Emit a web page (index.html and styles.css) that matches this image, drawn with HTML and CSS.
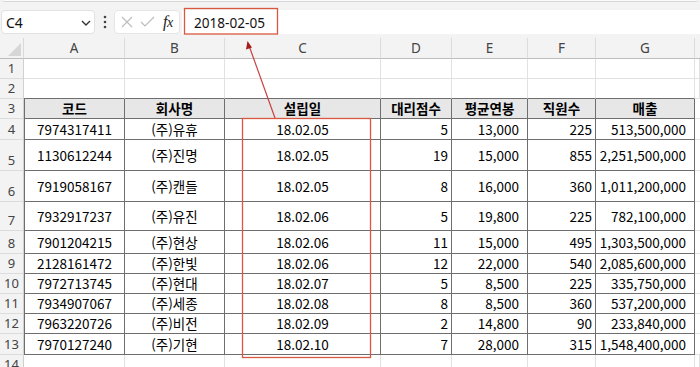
FILE: index.html
```html
<!DOCTYPE html>
<html lang="ko">
<head>
<meta charset="utf-8">
<link rel="stylesheet" href="styles.css">
</head>
<body>
<div class="page">
  <div class="ribbon"><div class="ribbon-panel"></div></div>
  <div class="fbar">
    <div class="namebox">
      <span class="ref">C4</span>
      <svg class="chev" width="10" height="8" viewBox="0 0 10 8"><polyline points="1,2 5,6 9,2" fill="none" stroke="#333" stroke-width="1.4"/></svg>
    </div>
    <svg class="dots" width="4" height="14" viewBox="0 0 4 14"><circle cx="2" cy="2" r="1.3" fill="#444"/><circle cx="2" cy="7" r="1.3" fill="#444"/><circle cx="2" cy="12" r="1.3" fill="#444"/></svg>
    <div class="fxbox">
      <svg width="14" height="14" viewBox="0 0 14 14"><path d="M2 2 L12 12 M12 2 L2 12" stroke="#bdbdbd" stroke-width="1.2" fill="none"/></svg>
      <svg width="15" height="12" viewBox="0 0 15 12"><polyline points="1,6 5,10 14,1" stroke="#bdbdbd" stroke-width="1.2" fill="none"/></svg>
      <span class="fx">f<span class="fxx">x</span></span>
    </div>
    <div class="finput"><span class="ftext">2018-02-05</span></div>
  </div>
  <div class="sheet">
    <div class="corner"><svg width="24" height="21" viewBox="0 0 24 21"><polygon points="21,5 21,18 8,18" fill="#d6d6d6"/></svg></div>
    <div class="ch">A</div><div class="ch">B</div><div class="ch">C</div><div class="ch">D</div><div class="ch">E</div><div class="ch">F</div><div class="ch">G</div><div class="ch last"></div>

    <div class="rh">1</div><div class="c"></div><div class="c"></div><div class="c"></div><div class="c"></div><div class="c"></div><div class="c"></div><div class="c"></div><div class="c"></div>
    <div class="rh">2</div><div class="c tb"></div><div class="c tb"></div><div class="c tb"></div><div class="c tb"></div><div class="c tb"></div><div class="c tb"></div><div class="c tb"></div><div class="c"></div>

    <div class="rh">3</div><div class="t h first">코드</div><div class="t h">회사명</div><div class="t h">설립일</div><div class="t h">대리점수</div><div class="t h">평균연봉</div><div class="t h">직원수</div><div class="t h">매출</div><div class="c tl"></div>

    <div class="rh">4</div><div class="t first">7974317411</div><div class="t">(주)유휴</div><div class="t">18.02.05</div><div class="t r">5</div><div class="t r2">13,000</div><div class="t r">225</div><div class="t r2">513,500,000</div><div class="c tl"></div>
    <div class="rh">5</div><div class="t first">1130612244</div><div class="t">(주)진명</div><div class="t">18.02.05</div><div class="t r">19</div><div class="t r2">15,000</div><div class="t r">855</div><div class="t r2">2,251,500,000</div><div class="c tl"></div>
    <div class="rh">6</div><div class="t first">7919058167</div><div class="t">(주)캔들</div><div class="t">18.02.05</div><div class="t r">8</div><div class="t r2">16,000</div><div class="t r">360</div><div class="t r2">1,011,200,000</div><div class="c tl"></div>
    <div class="rh">7</div><div class="t first">7932917237</div><div class="t">(주)유진</div><div class="t">18.02.06</div><div class="t r">5</div><div class="t r2">19,800</div><div class="t r">225</div><div class="t r2">782,100,000</div><div class="c tl"></div>
    <div class="rh">8</div><div class="t first">7901204215</div><div class="t">(주)현상</div><div class="t">18.02.06</div><div class="t r">11</div><div class="t r2">15,000</div><div class="t r">495</div><div class="t r2">1,303,500,000</div><div class="c tl"></div>
    <div class="rh">9</div><div class="t first">2128161472</div><div class="t">(주)한빛</div><div class="t">18.02.06</div><div class="t r">12</div><div class="t r2">22,000</div><div class="t r">540</div><div class="t r2">2,085,600,000</div><div class="c tl"></div>
    <div class="rh">10</div><div class="t first">7972713745</div><div class="t">(주)현대</div><div class="t">18.02.07</div><div class="t r">5</div><div class="t r2">8,500</div><div class="t r">225</div><div class="t r2">335,750,000</div><div class="c tl"></div>
    <div class="rh">11</div><div class="t first">7934907067</div><div class="t">(주)세종</div><div class="t">18.02.08</div><div class="t r">8</div><div class="t r2">8,500</div><div class="t r">360</div><div class="t r2">537,200,000</div><div class="c tl"></div>
    <div class="rh">12</div><div class="t first">7963220726</div><div class="t">(주)비전</div><div class="t">18.02.09</div><div class="t r">2</div><div class="t r2">14,800</div><div class="t r">90</div><div class="t r2">233,840,000</div><div class="c tl"></div>
    <div class="rh">13</div><div class="t first">7970127240</div><div class="t">(주)기현</div><div class="t">18.02.10</div><div class="t r">7</div><div class="t r2">28,000</div><div class="t r">315</div><div class="t r2">1,548,400,000</div><div class="c tl"></div>
    <div class="rh">14</div><div class="c"></div><div class="c"></div><div class="c"></div><div class="c"></div><div class="c"></div><div class="c"></div><div class="c"></div><div class="c"></div>
  </div>
  <svg class="annot" width="700" height="367" viewBox="0 0 700 367">
    <rect x="184.5" y="8.5" width="93" height="25.5" fill="none" stroke="#d9573f" stroke-width="1.3"/>
    <rect x="242.5" y="118.5" width="128" height="239" fill="none" stroke="#d9573f" stroke-width="1.3"/>
    <line x1="275" y1="118" x2="249.5" y2="47" stroke="#c94040" stroke-width="1.2"/>
    <polygon points="247.5,41 246,49.5 252,47.5" fill="#a51c1c"/>
  </svg>
</div>
</body>
</html>
```
FILE: styles.css
```css
html, body {
  margin: 0;
  padding: 0;
  width: 700px;
  height: 367px;
  overflow: hidden;
  background: #ffffff;
}
.page {
  position: relative;
  width: 700px;
  height: 367px;
  overflow: hidden;
  font-family: "Noto Sans CJK KR", "Noto Sans", sans-serif;
  color: #000;
}
.ribbon {
  height: 3px;
  background: #f3f3f3;
  overflow: hidden;
}
.ribbon-panel {
  height: 2px;
  margin: 0 2px;
  background: #fbfbfb;
  border-bottom: 1px solid #d6d6d6;
  border-radius: 0 0 4px 4px;
  box-sizing: border-box;
}
.fbar {
  height: 35px;
  background: #f3f3f3;
  display: flex;
  align-items: flex-start;
  padding-top: 7px;
  box-sizing: border-box;
}
.namebox {
  width: 94px;
  height: 24px;
  margin-left: 1px;
  background: #fff;
  border: 1px solid #e2e2e2;
  border-radius: 4px;
  box-sizing: border-box;
  display: flex;
  align-items: center;
  justify-content: space-between;
  padding: 0 3px 0 4px;
}
.ref {
  font-family: "Noto Sans", sans-serif;
  font-size: 14px;
  color: #111;
}
.chev {
  margin-top: 1px;
}
.dots {
  margin: 5px 0 0 8px;
}
.fxbox {
  width: 66px;
  height: 24px;
  margin-left: 7px;
  background: #fff;
  border: 1px solid #e6e6e6;
  border-radius: 4px;
  box-sizing: border-box;
  display: flex;
  align-items: center;
  gap: 6px;
  padding-left: 5px;
}
.fx {
  font-family: "Liberation Serif", serif;
  font-style: italic;
  font-size: 16px;
  color: #222;
  letter-spacing: -0.5px;
  margin-left: 2px;
}
.fxx {
  font-size: 14px;
}
.finput {
  flex: 1;
  height: 24px;
  margin-left: 2px;
  background: #fff;
  box-sizing: border-box;
  display: flex;
  align-items: center;
  padding-left: 12px;
}
.ftext {
  font-family: "Noto Sans", sans-serif;
  font-size: 13.6px;
  color: #111;
}
.sheet {
  display: grid;
  grid-template-columns: 24px 101px 100px 156px 71px 76px 68px 99px 5px;
  grid-template-rows: 21px 20px 20px 20px 21px 31px 31px 29px 23px 20px 20px 20px 20px 21px 20px;
  font-size: 13.5px;
}
.corner {
  background: #f3f3f3;
  border-right: 1px solid #d9d9d9;
  border-bottom: 1px solid #bdbdbd;
  box-sizing: border-box;
}
.corner svg {
  display: block;
}
.ch {
  background: #f3f3f3;
  border-right: 1px solid #dcdcdc;
  border-bottom: 1px solid #bdbdbd;
  box-sizing: border-box;
  display: flex;
  align-items: center;
  justify-content: center;
  font-family: "Noto Sans", sans-serif;
  font-size: 13.5px;
  color: #444;
}
.ch.last {
  border-right: none;
}
.rh {
  background: #f3f3f3;
  border-right: 1px solid #d0d0d0;
  border-bottom: 1px solid #dcdcdc;
  box-sizing: border-box;
  display: flex;
  align-items: flex-end;
  justify-content: center;
  padding-bottom: 2px;
  font-family: "Noto Sans", sans-serif;
  font-size: 13px;
  line-height: 15px;
  color: #444;
}
.c {
  border-right: 1px solid #e1e1e1;
  border-bottom: 1px solid #e1e1e1;
  box-sizing: border-box;
}
.c.tb {
  border-bottom-color: #6e6e6e;
}
.c.tl {
  border-right: none;
}
.t {
  border-right: 1px solid #6e6e6e;
  border-bottom: 1px solid #6e6e6e;
  box-sizing: border-box;
  display: flex;
  align-items: center;
  justify-content: center;
  line-height: 1;
  white-space: nowrap;
  padding-top: 1px;
}
.t.first {
  border-left: 1px solid #6e6e6e;
}
.t.h {
  background: #e7e7e7;
  font-weight: 700;
}
.t.r {
  justify-content: flex-end;
  padding-right: 3px;
}
.t.r2 {
  justify-content: flex-end;
  padding-right: 8px;
}
.annot {
  position: absolute;
  left: 0;
  top: 0;
  pointer-events: none;
}
```
